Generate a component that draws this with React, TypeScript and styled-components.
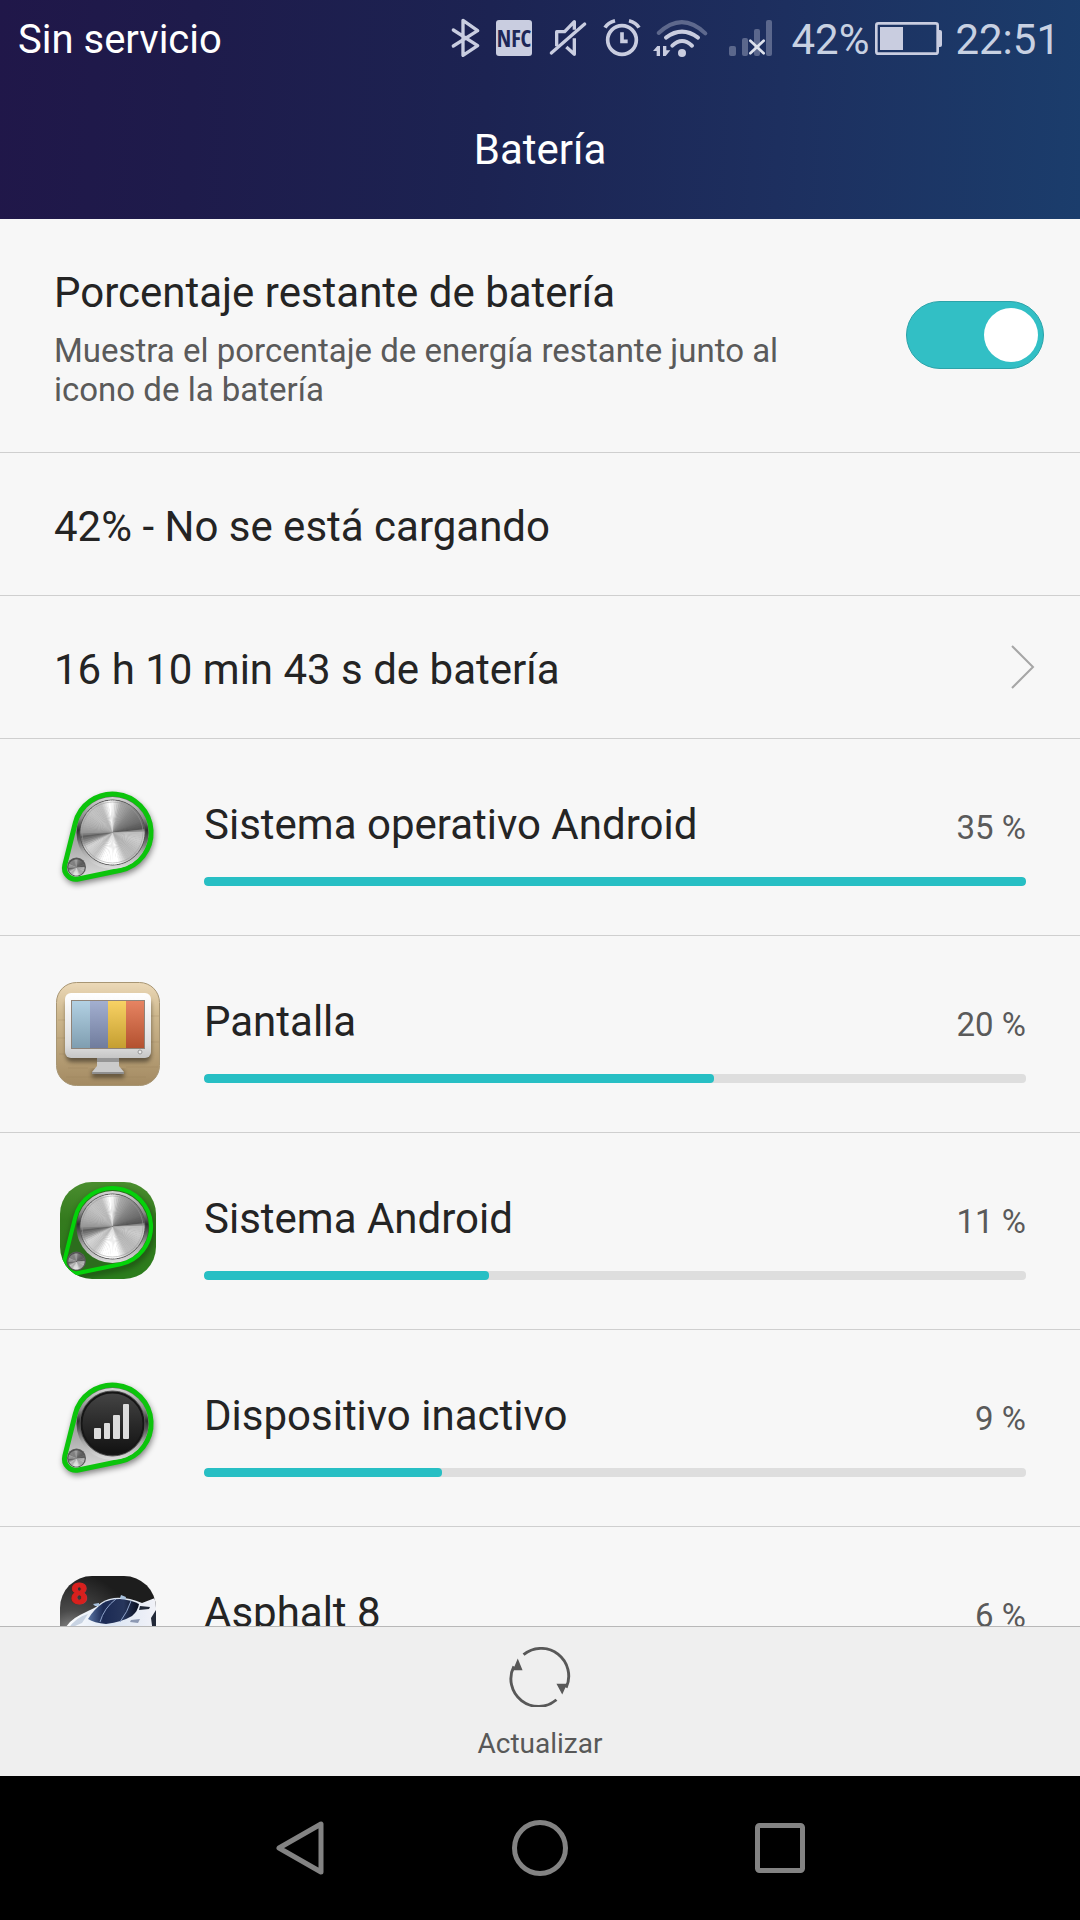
import React, { useState } from "react";
import styled, { createGlobalStyle } from "styled-components";

const GlobalStyle = createGlobalStyle`
  * { box-sizing: border-box; }
  body {
    margin: 0;
    background: #000;
    font-family: Roboto, "Noto Sans", sans-serif;
    color: #242424;
  }
  button { font: inherit; color: inherit; border: 0; background: none; padding: 0; cursor: pointer; }
`;

const Screen = styled.div`
  display: flex;
  flex-direction: column;
  height: 100vh;
`;

const Header = styled.header`
  flex: none;
  background: linear-gradient(93deg, #201749 0%, #1e1b4b 18%, #1c2352 45%, #1d2f5f 72%, #1b3d6c 100%);
`;

const StatusBar = styled.div`
  display: flex;
  align-items: center;
  justify-content: space-between;
  height: 76px;
  padding: 0 20px 0 18px;
`;

const Carrier = styled.span`
  padding-top: 4px;
  font-size: 40px;
  line-height: 48px;
  color: #fff;
`;

const StatusIcons = styled.div`
  display: flex;
  align-items: center;
  gap: 18px;
  color: #c9cde0;
`;

const BatteryStatus = styled.div`
  display: flex;
  align-items: center;
  gap: 6px;
`;

const StatusText = styled.span`
  padding-top: 4px;
  font-size: 42px;
  line-height: 48px;
  color: #c8d1e2;
`;

const Clock = styled(StatusText).attrs({ as: "time" })`
  margin-left: -5px;
`;

const StatusSvg = styled.svg`
  display: block;
  height: 38px;
  overflow: visible;
`;

const PageTitle = styled.h1`
  margin: 0;
  height: 143px;
  line-height: 148px;
  font-size: 42px;
  font-weight: 400;
  text-align: center;
  color: #fff;
`;

const Content = styled.main`
  flex: 1;
  min-height: 0;
  overflow: auto;
  scrollbar-width: none;
  background: #f7f7f7;
`;

const Row = styled.div`
  display: flex;
  align-items: center;
  justify-content: space-between;
  width: 100%;
  padding: 0 36px 0 54px;
  border-bottom: 1px solid #cfcfcf;
  text-align: left;
`;

const SwitchRow = styled(Row)`
  height: 234px;
  padding-bottom: 2px;
`;

const PlainRow = styled(Row)`
  height: 143px;
`;

const LinkRow = styled(PlainRow).attrs({ as: "button", type: "button" })`
  border-bottom: 1px solid #cfcfcf;
  padding: 0 45px 0 54px;
`;

const SwitchLabel = styled.label`
  display: flex;
  flex-direction: column;
  gap: 14px;
  max-width: 780px;
  padding-top: 8px;
`;

const Primary = styled.span`
  font-size: 42px;
  line-height: 48px;
`;

const RowText = styled(Primary)`
  padding-top: 6px;
`;

const Secondary = styled.span`
  font-size: 33px;
  line-height: 39px;
  color: #5a5a5a;
`;

const Toggle = styled.input`
  appearance: none;
  flex: none;
  display: flex;
  align-items: center;
  width: 138px;
  height: 68px;
  margin: 0;
  padding: 0 5px;
  border: 1px solid #2ba3a9;
  border-radius: 34px;
  background: #32bfc5;
  cursor: pointer;

  &::before {
    content: "";
    width: 54px;
    height: 54px;
    border-radius: 50%;
    background: #fff;
  }
  &:checked::before { margin-left: auto; }
  &:not(:checked) { background: #ccc; border-color: #aaa; }
`;

const AppList = styled.ul`
  margin: 0;
  padding: 0;
  list-style: none;
`;

const AppRow = styled.li`
  display: flex;
  align-items: center;
  gap: 44px;
  height: 197px;
  padding: 0 54px 0 56px;
  border-bottom: 1px solid #cfcfcf;
`;

const AppIcon = styled.svg`
  flex: none;
  width: 104px;
  height: 104px;
`;

const AppInfo = styled.div`
  flex: 1;
  display: flex;
  flex-direction: column;
  gap: 28px;
  padding-top: 13px;
`;

const AppHeading = styled.div`
  display: flex;
  align-items: baseline;
  justify-content: space-between;
`;

const Track = styled.div`
  height: 9px;
  border-radius: 4px;
  background: #dedede;
  overflow: hidden;
`;

const Fill = styled.div`
  height: 100%;
  border-radius: 4px;
  background: #27bfc4;
`;

const Toolbar = styled.footer`
  flex: none;
  display: flex;
  justify-content: center;
  height: 150px;
  border-top: 1px solid #b8b8b8;
  background: #efefef;
`;

const ToolButton = styled.button`
  display: flex;
  flex-direction: column;
  align-items: center;
  gap: 20px;
  padding: 20px 24px 0;
  font-size: 28px;
  line-height: 34px;
  color: #585858;
`;

const NavBar = styled.nav`
  flex: none;
  display: flex;
  justify-content: center;
  height: 144px;
  background: #000;
`;

const NavButton = styled.button`
  display: flex;
  align-items: center;
  justify-content: center;
  width: 240px;
  color: #838383;
`;

/* Status icons share a vertical range of 114 units, three per pixel. */
const Bluetooth = () => (
  <StatusSvg width="28" viewBox="30 54 84 114" fill="none" stroke="currentColor" strokeWidth="10" strokeLinecap="round" strokeLinejoin="round">
    <path d="M40 87L113 134L69 163V58L113 89L40 135" />
  </StatusSvg>
);

const Nfc = () => (
  <StatusSvg width="36" viewBox="168 54 108 114">
    <rect x="168" y="57" width="108" height="108" rx="9" fill="currentColor" />
    <text x="222" y="137" textAnchor="middle" fontFamily="'Liberation Sans Narrow', 'Open Sans Condensed', 'Roboto Condensed', Roboto, sans-serif" fontSize="69" fill="#1d2757">
      NFC
    </text>
  </StatusSvg>
);

const Muted = () => (
  <StatusSvg width="36" viewBox="330 54 108 114" fill="none" stroke="currentColor" strokeWidth="10" strokeLinejoin="round">
    <path d="M350 136V92H374L403 62V86" />
    <path d="M403 112V160L379 138" />
    <path d="M334 156L434 69" strokeLinecap="round" />
  </StatusSvg>
);

const Alarm = () => (
  <StatusSvg width="36" viewBox="492 54 108 114" fill="none" stroke="currentColor" strokeWidth="11">
    <circle cx="546" cy="117" r="43" />
    <path d="M546 94V121H563" />
    <path d="M495 80Q504 64 525 59M567 59Q588 64 597 80" />
  </StatusSvg>
);

const Wifi = () => (
  <StatusSvg width="49" viewBox="654 54 147 114" fill="none" stroke="currentColor" strokeWidth="12" strokeLinecap="round">
    <path d="M656 96Q726 30 796 97" opacity="0.38" />
    <path d="M678 110Q726 74 774 110" />
    <path d="M697 134Q726 106 756 134" />
    <circle cx="726" cy="156" r="12" fill="currentColor" stroke="none" />
    <path d="M639 150L652 135H660V165H650V150ZM669 135H679V148H691L677 165H669Z" fill="currentColor" stroke="none" />
  </StatusSvg>
);

const Signal = () => (
  <StatusSvg width="48" viewBox="75 54 144 114">
    <g fill="currentColor" opacity="0.36">
      <rect x="87" y="135" width="21" height="30" rx="6" />
      <rect x="126" y="111" width="18" height="54" rx="6" />
      <rect x="162" y="84" width="18" height="81" rx="6" />
      <rect x="198" y="57" width="18" height="108" rx="6" />
    </g>
    <path d="M151 119L191 157M191 119L151 157" stroke="#dde1ec" strokeWidth="8" strokeLinecap="round" />
  </StatusSvg>
);

const Battery = () => (
  <StatusSvg width="67" viewBox="525 54 201 114">
    <rect x="529" y="67" width="184" height="91" rx="6" fill="none" stroke="currentColor" strokeWidth="8" />
    <rect x="540" y="78" width="69" height="69" fill="currentColor" />
    <path d="M716 87H720Q726 87 726 93V132Q726 138 720 138H716Z" fill="currentColor" />
  </StatusSvg>
);

const BELT = "M19.2 39.3A38.5 38.5 0 1 1 64.4 86.2L22.3 95A11.5 11.5 0 0 1 8.8 81Z";

/* Brightness of the brushed disk by angle, clockwise from the top. */
const SHEEN: [number, number][] = [
  [0, 235], [14, 170], [40, 135], [65, 110], [80, 85], [88, 190], [105, 205], [130, 185], [150, 190],
  [168, 255], [198, 255], [215, 195], [238, 215], [250, 140], [260, 95], [268, 150], [285, 175], [310, 195], [335, 190], [352, 255], [360, 235],
];

const sheenAt = (deg: number) => {
  const i = SHEEN.findIndex(([a]) => a > deg);
  const [a0, v0] = SHEEN[i - 1];
  const [a1, v1] = SHEEN[i];
  return Math.round(v0 + ((v1 - v0) * (deg - a0)) / (a1 - a0));
};

const Disk = ({ cx, cy, r }: { cx: number; cy: number; r: number }) => {
  const point = (deg: number) => {
    const t = ((deg - 90) * Math.PI) / 180;
    return `${(cx + r * Math.cos(t)).toFixed(2)} ${(cy + r * Math.sin(t)).toFixed(2)}`;
  };
  return (
    <g>
      {Array.from({ length: 90 }, (_, i) => {
        const v = sheenAt(i * 4);
        return (
          <path key={i} d={`M${cx} ${cy}L${point(i * 4)}A${r} ${r} 0 0 1 ${point(i * 4 + 5)}Z`} fill={`rgb(${v},${v},${v})`} />
        );
      })}
    </g>
  );
};

const Knob = ({ id, tile, signal }: { id: string; tile?: boolean; signal?: boolean }) => (
  <AppIcon viewBox="0 1 104 104" overflow="visible" aria-hidden="true">
    <defs>
      <linearGradient id={`${id}-rim`} x1="0" y1="0" x2="0" y2="1">
        <stop offset="0" stopColor="#d6d6d6" />
        <stop offset="0.3" stopColor="#8a8a8a" />
        <stop offset="0.46" stopColor="#2f2f2f" />
        <stop offset="0.56" stopColor="#555" />
        <stop offset="0.75" stopColor="#a8a8a8" />
        <stop offset="1" stopColor="#dedede" />
      </linearGradient>
      <linearGradient id={`${id}-tile`} x1="0" y1="0" x2="0" y2="1">
        <stop offset="0" stopColor="#4c9030" />
        <stop offset="0.4" stopColor="#347a1e" />
        <stop offset="1" stopColor="#2a7d1c" />
      </linearGradient>
      <linearGradient id={`${id}-plate`} x1="0" y1="0" x2="0" y2="1">
        <stop offset="0" stopColor="#666" />
        <stop offset="0.6" stopColor="#aaa" />
        <stop offset="1" stopColor="#ddd" />
      </linearGradient>
      <linearGradient id={`${id}-face`} x1="0" y1="0" x2="0" y2="1">
        <stop offset="0" stopColor="#454545" />
        <stop offset="0.5" stopColor="#2a2a2a" />
        <stop offset="1" stopColor="#111" />
      </linearGradient>
      <clipPath id={`${id}-clip`}>
        <rect x="4" y="4" width="96" height="97" rx="32" />
      </clipPath>
      <filter id={`${id}-blur`} x="-20%" y="-20%" width="140%" height="140%">
        <feGaussianBlur stdDeviation="3" />
      </filter>
    </defs>
    <g clipPath={tile ? `url(#${id}-clip)` : undefined}>
      {tile && <rect width="104" height="104" fill={`url(#${id}-tile)`} />}
      <path d={BELT} transform="translate(1 3)" fill={tile ? "none" : "#000"} stroke="#000" strokeWidth="4" opacity="0.5" filter={`url(#${id}-blur)`} />
      <path d={BELT} fill={tile ? "#2c6d1d" : `url(#${id}-plate)`} stroke={tile ? "#04d20a" : "#0cc40c"} strokeWidth={tile ? 4 : 5} />
      <circle cx="56.5" cy="49" r="36" fill={`url(#${id}-rim)`} />
      <circle cx="56.5" cy="48.5" r="32.5" fill="#777" stroke="#555" strokeWidth="1" />
      {signal ? (
        <>
          <circle cx="56.5" cy="48.5" r="31" fill={`url(#${id}-face)`} stroke="#161616" strokeWidth="2" />
          <g fill="#dcdcdc">
            <rect x="38" y="53" width="7" height="11" rx="1" />
            <rect x="48" y="48" width="6" height="16" rx="1" />
            <rect x="57" y="40" width="7" height="24" rx="1" />
            <rect x="67" y="29" width="6" height="35" rx="1" />
          </g>
        </>
      ) : (
        <>
          <Disk cx={56.5} cy={48.5} r={32} />
          <circle cx="56.5" cy="48.5" r="30.5" fill="none" stroke="#999" strokeWidth="1" opacity="0.5" />
        </>
      )}
      <circle cx="20.5" cy="83" r="9.5" fill="#5a5a5a" />
      <Disk cx={20.5} cy={83.5} r={8} />
      <path d="M13 80A8 8 0 0 1 28 80L20.5 83Z" fill="#333" opacity="0.35" />
    </g>
  </AppIcon>
);

const MonitorIcon = () => (
  <AppIcon viewBox="0 0 104 104" overflow="visible" aria-hidden="true">
    <defs>
      <linearGradient id="wood" x1="0" y1="0" x2="0" y2="1">
        <stop offset="0" stopColor="#ecd9b8" />
        <stop offset="0.3" stopColor="#cfb98f" />
        <stop offset="1" stopColor="#a38a62" />
      </linearGradient>
      <linearGradient id="case" x1="0" y1="0" x2="0" y2="1">
        <stop offset="0" stopColor="#fff" />
        <stop offset="0.8" stopColor="#dedede" />
        <stop offset="1" stopColor="#c6c6c6" />
      </linearGradient>
      <linearGradient id="shade" x1="0" y1="0" x2="0" y2="1">
        <stop offset="0" stopColor="#fff" stopOpacity="0.2" />
        <stop offset="1" stopColor="#000" stopOpacity="0.2" />
      </linearGradient>
      <filter id="soft" x="-20%" y="-20%" width="140%" height="160%">
        <feGaussianBlur stdDeviation="2" />
      </filter>
    </defs>
    <rect x="0.5" y="0.5" width="103" height="103" rx="20" fill="url(#wood)" stroke="#a89674" />
    <g stroke="#8d7550" opacity="0.22">
      <path d="M2 38H10M1 56H9M3 72H10M12 86H32M70 85H102M10 95H90M95 34H103M95 60H103" />
    </g>
    <rect x="10" y="17" width="85" height="63" rx="6" opacity="0.45" filter="url(#soft)" />
    <rect x="36" y="88" width="32" height="8" opacity="0.4" filter="url(#soft)" />
    <path d="M41 74H63V84L68 90V92H36V90L41 84Z" fill="#cacaca" />
    <path d="M41 76H63V80H41Z" fill="#959595" />
    <path d="M36 90H68V92H36Z" fill="#8f8f8f" />
    <rect x="9" y="11" width="86" height="65" rx="6" fill="url(#case)" />
    <rect x="15" y="18" width="74" height="49" fill="#8f8378" />
    <rect x="16" y="19" width="18" height="47" fill="#9fc5dc" />
    <rect x="34" y="19" width="18" height="47" fill="#8c9bc4" />
    <rect x="52" y="19" width="18" height="47" fill="#f6c63d" />
    <rect x="70" y="19" width="18" height="47" fill="#e0653b" />
    <rect x="16" y="19" width="72" height="47" fill="url(#shade)" />
    <circle cx="84" cy="70" r="2" fill="#eee" stroke="#999" />
  </AppIcon>
);

const CarIcon = () => (
  <AppIcon viewBox="0 0 104 104" overflow="visible" aria-hidden="true">
    <defs>
      <radialGradient id="road" cx="0.15" cy="0.6" r="0.6">
        <stop offset="0" stopColor="#9a9a9a" />
        <stop offset="0.4" stopColor="#4a4a4a" />
        <stop offset="1" stopColor="#1d1d1d" />
      </radialGradient>
      <linearGradient id="body" x1="0" y1="0" x2="1" y2="0">
        <stop offset="0" stopColor="#fff" />
        <stop offset="0.5" stopColor="#dce6f4" />
        <stop offset="1" stopColor="#f3f3f8" />
      </linearGradient>
      <linearGradient id="glass" x1="0" y1="0" x2="1" y2="0">
        <stop offset="0" stopColor="#5b76a4" />
        <stop offset="0.3" stopColor="#1b2a54" />
        <stop offset="0.7" stopColor="#27365c" />
        <stop offset="1" stopColor="#090e1f" />
      </linearGradient>
      <clipPath id="car-clip">
        <rect x="4" y="3" width="96" height="97" rx="32" />
      </clipPath>
    </defs>
    <g clipPath="url(#car-clip)">
      <rect width="104" height="104" fill="url(#road)" />
      <text x="23" y="31" textAnchor="middle" fontFamily="Roboto, sans-serif" fontWeight="900" fontSize="29" fill="#d8201d" stroke="#d8201d" strokeWidth="1">
        8
      </text>
      <path d="M8 104V58Q12 48 24 42Q34 37 40 34Q48 26 58 25Q72 24 86 30L99 25L104 34V104Z" fill="url(#body)" />
      <path d="M12 56Q20 44 32 41L26 50Z" fill="#c8d3e2" />
      <path d="M64 25L65 22L70 24L69 28ZM37 31L43 30L43 33L39 33Z" fill="#a9c2de" />
      <path d="M32 46Q38 36 47 30Q54 26 64 26Q76 27 83 31Q82 38 76 43Q66 49 50 51Q38 50 32 46Z" fill="url(#glass)" />
      <path d="M44 49Q48 35 60 26M64 49Q72 38 75 28" fill="none" stroke="#8ea2c8" strokeWidth="1" />
      <path d="M84 33L94 34L93 36L83 37ZM95 45L100 37V60H97Z" fill="#222938" />
      <path d="M75 47L84 46L82 50L74 49Z" fill="#8d99b3" />
    </g>
  </AppIcon>
);

const APPS = [
  { name: "Sistema operativo Android", percent: 35, fill: 100, icon: <Knob id="os" /> },
  { name: "Pantalla", percent: 20, fill: 62, icon: <MonitorIcon /> },
  { name: "Sistema Android", percent: 11, fill: 34.7, icon: <Knob id="system" tile /> },
  { name: "Dispositivo inactivo", percent: 9, fill: 29, icon: <Knob id="idle" signal /> },
  { name: "Asphalt 8", percent: 6, fill: 19, icon: <CarIcon /> },
];

export default function App() {
  const [showPercent, setShowPercent] = useState(true);
  return (
    <Screen>
      <GlobalStyle />
      <Header>
        <StatusBar>
          <Carrier>Sin servicio</Carrier>
          <StatusIcons>
            <Bluetooth />
            <Nfc />
            <Muted />
            <Alarm />
            <Wifi />
            <Signal />
            <BatteryStatus>
              <StatusText>42%</StatusText>
              <Battery />
            </BatteryStatus>
            <Clock>22:51</Clock>
          </StatusIcons>
        </StatusBar>
        <PageTitle>Batería</PageTitle>
      </Header>
      <Content>
        <SwitchRow>
          <SwitchLabel htmlFor="show-percent">
            <Primary>Porcentaje restante de batería</Primary>
            <Secondary>Muestra el porcentaje de energía restante junto al icono de la batería</Secondary>
          </SwitchLabel>
          <Toggle id="show-percent" type="checkbox" role="switch" checked={showPercent} onChange={(e) => setShowPercent(e.target.checked)} />
        </SwitchRow>
        <PlainRow>
          <RowText>42% - No se está cargando</RowText>
        </PlainRow>
        <LinkRow>
          <RowText>16 h 10 min 43 s de batería</RowText>
          <svg width="24" height="44" viewBox="0 0 24 44" fill="none" stroke="#a6a6a6" strokeWidth="2" aria-hidden="true">
            <path d="M1 1L22 22L1 43" />
          </svg>
        </LinkRow>
        <AppList>
          {APPS.map((app) => (
            <AppRow key={app.name}>
              {app.icon}
              <AppInfo>
                <AppHeading>
                  <Primary>{app.name}</Primary>
                  <Secondary>{app.percent} %</Secondary>
                </AppHeading>
                <Track role="progressbar" aria-label={app.name} aria-valuenow={app.percent}>
                  <Fill style={{ width: `${app.fill}%` }} />
                </Track>
              </AppInfo>
            </AppRow>
          ))}
        </AppList>
      </Content>
      <Toolbar>
        <ToolButton type="button">
          <svg width="62" height="60" viewBox="0 0 64 62" fill="none" stroke="currentColor" strokeWidth="3" aria-hidden="true">
            <path d="M15 8A28.5 28.5 0 0 1 59 42" />
            <path d="M49 54.5A28.5 28.5 0 0 1 5 20" />
            <path d="M9 12L14 24L4 24ZM55 49L49 38L60 38Z" fill="currentColor" stroke="none" />
          </svg>
          Actualizar
        </ToolButton>
      </Toolbar>
      <NavBar>
        <NavButton type="button" aria-label="Atrás">
          <svg width="50" height="56" viewBox="0 0 50 56" fill="none" stroke="currentColor" strokeWidth="5" strokeLinejoin="round">
            <path d="M46 4V52L4 28Z" />
          </svg>
        </NavButton>
        <NavButton type="button" aria-label="Inicio">
          <svg width="56" height="56" viewBox="0 0 56 56" fill="none" stroke="currentColor" strokeWidth="5">
            <circle cx="28" cy="28" r="25.5" />
          </svg>
        </NavButton>
        <NavButton type="button" aria-label="Recientes">
          <svg width="50" height="50" viewBox="0 0 50 50" fill="none" stroke="currentColor" strokeWidth="5">
            <rect x="2.5" y="2.5" width="45" height="45" rx="2" />
          </svg>
        </NavButton>
      </NavBar>
    </Screen>
  );
}
